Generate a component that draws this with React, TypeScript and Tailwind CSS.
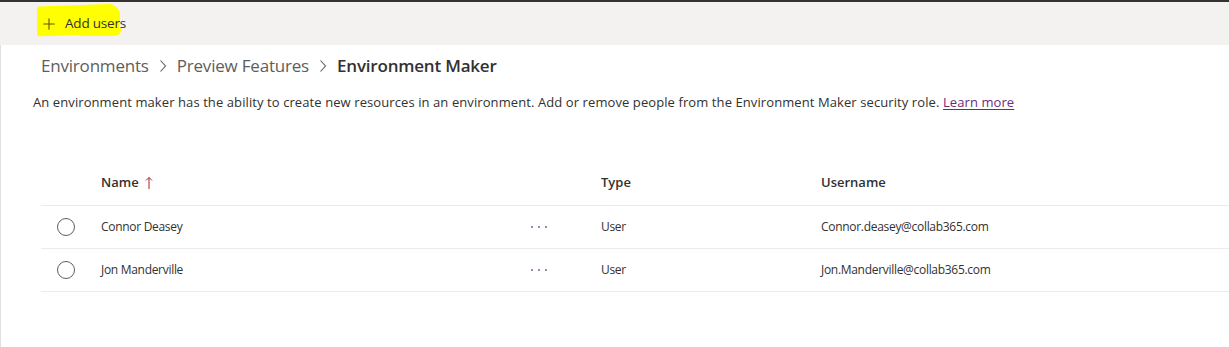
import { Plus } from 'lucide-react';

const font = { fontFamily: '"Open Sans", "Noto Sans", sans-serif' };

type Row = { name: string; type: string; username: string };

const rows: Row[] = [
  { name: 'Connor Deasey', type: 'User', username: 'Connor.deasey@collab365.com' },
  { name: 'Jon Manderville', type: 'User', username: 'Jon.Manderville@collab365.com' },
];

function Chevron() {
  return (
    <svg width="10" height="14" viewBox="0 0 10 14" className="mx-[9px]">
      <path d="M2.5 1.5 L7.5 7 L2.5 12.5" fill="none" stroke="#605e5c" strokeWidth="1.1" />
    </svg>
  );
}

function SortArrow() {
  return (
    <svg width="8" height="14" viewBox="0 0 8 14" className="ml-[6px]">
      <path d="M4 13 V1.5 M1 4.5 L4 1.5 L7 4.5" fill="none" stroke="#a4262c" strokeWidth="1" />
    </svg>
  );
}

export default function App() {
  return (
    <div className="w-[1229px] h-[347px] bg-white overflow-hidden text-[#323130]" style={font}>
      <div className="h-[2px] bg-[#333333]" />
      {/* Toolbar */}
      <div className="h-[43px] bg-[#f3f2f1] flex items-center pl-[40px]">
        <div className="relative flex items-center h-[28px]">
          {/* highlighter mark */}
          <div className="absolute left-[-3px] top-[-5px] w-[83px] h-[30px] bg-[#ffff00] rounded-[2px_12px_10px_3px] -skew-y-2" />
          <div className="absolute left-[40px] top-[18px] w-[42px] h-[8px] bg-[#ffff00] rounded-br-[8px]" />
          <Plus size={18} strokeWidth={1.4} className="relative text-[#5c5000]" />
          <span className="relative ml-[7px] text-[13.5px] tracking-[-0.2px] text-[#323130]">Add users</span>
        </div>
      </div>

      <div className="border-l border-[#e1dfdd] h-full">
        {/* Breadcrumb */}
        <div className="flex items-center pl-[40px] pt-[1px] h-[40px] text-[17px] tracking-[-0.2px]">
          <span className="text-[#605e5c]">Environments</span>
          <Chevron />
          <span className="text-[#605e5c]">Preview Features</span>
          <Chevron />
          <span className="font-semibold text-[#323130]">Environment Maker</span>
        </div>

        {/* Description */}
        <p className="pl-[32px] mt-[8px] text-[13px] tracking-[0.09px] text-[#323130]">
          An environment maker has the ability to create new resources in an environment. Add or remove people from the
          Environment Maker security role.{' '}
          <a className="text-[#6b2c7b] underline underline-offset-2">Learn more</a>
        </p>

        {/* Table */}
        <div className="ml-[40px] mt-[49px]">
          <div className="flex items-center h-[44px] border-b border-[#edebe9] text-[13px] font-semibold">
            <div className="w-[60px]" />
            <div className="w-[500px] flex items-center">
              Name
              <SortArrow />
            </div>
            <div className="w-[220px]">Type</div>
            <div>Username</div>
          </div>
          {rows.map((r) => (
            <div key={r.name} className="flex items-center h-[43px] border-b border-[#edebe9] text-[12px] tracking-[-0.3px]">
              <div className="w-[60px] flex justify-center pr-[10px]">
                <div className="w-[18px] h-[18px] rounded-full border border-[#605e5c]" />
              </div>
              <div className="w-[430px]">{r.name}</div>
              <div className="w-[70px] flex gap-[5px]">
                <span className="w-[2px] h-[2px] bg-[#a685b0]" />
                <span className="w-[2px] h-[2px] bg-[#a685b0]" />
                <span className="w-[2px] h-[2px] bg-[#a685b0]" />
              </div>
              <div className="w-[220px]">{r.type}</div>
              <div>{r.username}</div>
            </div>
          ))}
        </div>
      </div>
    </div>
  );
}
